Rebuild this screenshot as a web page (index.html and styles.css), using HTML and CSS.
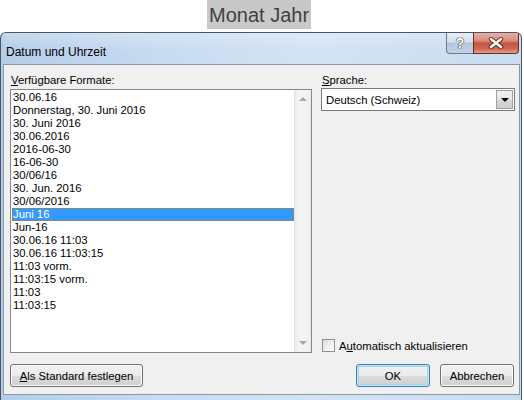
FILE: index.html
```html
<!DOCTYPE html>
<html lang="de">
<head>
    <meta charset="UTF-8">
    <title>Datum und Uhrzeit</title>
    <link rel="stylesheet" href="styles.css">
</head>
<body>
    <div class="caption">
        <span class="caption-box">Monat Jahr</span>
    </div>

    <div class="window">
        <!-- Title bar -->
        <div class="titlebar">
            <span class="title">Datum und Uhrzeit</span>
            <div class="caption-buttons">
                <span class="btn-help">?</span>
                <span class="btn-close">
                    <svg width="18" height="12" viewBox="0 0 18 12">
                        <path d="M4 2 L14 10 M14 2 L4 10" stroke="#5a2a22" stroke-width="4.4" stroke-linecap="round"/>
                        <path d="M4 2 L14 10 M14 2 L4 10" stroke="#ffffff" stroke-width="2.6" stroke-linecap="round"/>
                    </svg>
                </span>
            </div>
        </div>

        <!-- Client area -->
        <div class="client">
            <div class="main">
                <div class="col-left">
                    <div class="label"><u>V</u>erfügbare Formate:</div>
                    <div class="listbox">
                        <ul class="items">
                            <li>30.06.16</li>
                            <li>Donnerstag, 30. Juni 2016</li>
                            <li>30. Juni 2016</li>
                            <li>30.06.2016</li>
                            <li>2016-06-30</li>
                            <li>16-06-30</li>
                            <li>30/06/16</li>
                            <li>30. Jun. 2016</li>
                            <li>30/06/2016</li>
                            <li class="selected">Juni 16</li>
                            <li>Jun-16</li>
                            <li>30.06.16 11:03</li>
                            <li>30.06.16 11:03:15</li>
                            <li>11:03 vorm.</li>
                            <li>11:03:15 vorm.</li>
                            <li>11:03</li>
                            <li>11:03:15</li>
                        </ul>
                        <div class="scrollbar">
                            <span class="arrow-up"></span>
                            <span class="arrow-down"></span>
                        </div>
                    </div>
                </div>

                <div class="col-right">
                    <div class="label"><u>S</u>prache:</div>
                    <div class="combo">
                        <span class="combo-text">Deutsch (Schweiz)</span>
                        <span class="combo-btn"><span class="combo-arrow"></span></span>
                    </div>
                    <div class="check">
                        <span class="checkbox"></span>
                        <span>A<u>u</u>tomatisch aktualisieren</span>
                    </div>
                </div>
            </div>

            <div class="buttons">
                <button class="btn btn-wide" type="button"><u>A</u>ls Standard festlegen</button>
                <span class="spacer"></span>
                <button class="btn btn-default" type="button">OK</button>
                <button class="btn" type="button">Abbrechen</button>
            </div>
        </div>
    </div>
</body>
</html>
```

FILE: styles.css
```css
body {
    margin: 0;
    background: #ffffff;
    font-family: "Liberation Sans", Arial, sans-serif;
    overflow: hidden;
    height: 400px;
}

u {
    text-decoration-thickness: 1px;
    text-underline-offset: 1px;
}

.caption {
    height: 29px;
    padding-left: 207px;
}

.caption-box {
    display: inline-block;
    height: 29px;
    line-height: 31px;
    padding: 0 2px;
    background: #c8c8c8;
    color: #404040;
    font-size: 20px;
}

.window {
    margin-top: 3px;
    width: 522px;
    box-sizing: border-box;
    border: 1px solid #4a5563;
    border-bottom: none;
    border-radius: 6px 6px 0 0;
    padding: 0 1px 5px 2px;
    background: linear-gradient(to right, #b4cde9 0%, #c7dbf1 30%, #d3e3f4 60%, #c9dcf0 100%);
    height: 368px;
}

.titlebar {
    display: flex;
    height: 31px;
    background: linear-gradient(to bottom, rgba(255,255,255,0.25), rgba(255,255,255,0) 60%);
}

.title {
    font-size: 12px;
    color: #000000;
    padding-left: 3px;
    padding-top: 12px;
    flex: 1;
}

.caption-buttons {
    display: flex;
    height: 22px;
    margin-right: 1px;
}

.btn-help {
    width: 27px;
    height: 21px;
    box-sizing: border-box;
    border: 1px solid #6b7b8f;
    border-top: none;
    border-right: none;
    border-radius: 0 0 0 4px;
    background: linear-gradient(to bottom, #e6eef7 0%, #d4e0ee 45%, #b3c5dc 50%, #c2d3e7 100%);
    color: #ffffff;
    font-size: 14px;
    font-weight: bold;
    text-align: center;
    line-height: 20px;
    text-shadow: 0 0 1px #333, 0 0 1px #333, 0 0 1px #333;
}

.btn-close {
    width: 46px;
    height: 21px;
    box-sizing: border-box;
    border: 1px solid #6e2d22;
    border-top: none;
    border-radius: 0 0 4px 0;
    background: linear-gradient(to bottom, #eab0a4 0%, #d98a78 40%, #c45640 50%, #cf6a52 80%, #e2a08f 100%);
    display: flex;
    align-items: center;
    justify-content: center;
}

.client {
    height: 331px;
    box-sizing: border-box;
    border: 1px solid #8797ab;
    background: #f0f0f0;
    padding: 8px 4px 7px 6px;
    display: flex;
    flex-direction: column;
    font-size: 11.3px;
    color: #000000;
}

.main {
    display: flex;
    gap: 9px;
}

.col-left {
    width: 302px;
}

.label {
    height: 16px;
    line-height: 15px;
    padding-left: 1px;
}

.listbox {
    height: 264px;
    box-sizing: border-box;
    border: 1px solid #828790;
    background: #ffffff;
    display: flex;
}

.items {
    list-style: none;
    margin: 1px 0 0 1px;
    padding: 0;
    flex: 1;
}

.items li {
    height: 13px;
    line-height: 13px;
    padding-left: 1px;
    white-space: nowrap;
}

.items li.selected {
    background: #3399ff;
    color: #ffffff;
    outline: 1px dotted #c87a00;
    outline-offset: -1px;
}

.scrollbar {
    width: 17px;
    border-left: 1px solid #e4e4e4;
    background: linear-gradient(to right, #ececec, #f4f4f4 30%, #f4f4f4 70%, #ececec);
    display: flex;
    flex-direction: column;
    justify-content: space-between;
    align-items: center;
    padding: 7px 0;
    box-sizing: border-box;
}

.arrow-up, .arrow-down {
    width: 0;
    height: 0;
    border-left: 4px solid transparent;
    border-right: 4px solid transparent;
}

.arrow-up {
    border-bottom: 4px solid #a7a7a7;
}

.arrow-down {
    border-top: 4px solid #a7a7a7;
}

.col-right {
    flex: 1;
    display: flex;
    flex-direction: column;
}

.combo {
    height: 23px;
    margin-top: -1px;
    box-sizing: border-box;
    border: 1px solid #7a7a7a;
    background: #ffffff;
    display: flex;
    align-items: center;
    padding: 1px;
}

.combo-text {
    flex: 1;
    padding-left: 3px;
}

.combo-btn {
    width: 17px;
    height: 19px;
    box-sizing: border-box;
    border: 1px solid #a0a0a0;
    background: linear-gradient(to bottom, #f2f2f2 0%, #e6e6e6 50%, #d6d6d6 51%, #cfcfcf 100%);
    display: flex;
    align-items: center;
    justify-content: center;
}

.combo-arrow {
    width: 0;
    height: 0;
    border-left: 4px solid transparent;
    border-right: 4px solid transparent;
    border-top: 4px solid #000000;
}

.check {
    margin-top: auto;
    margin-bottom: 1px;
    display: flex;
    align-items: center;
    gap: 4px;
    padding-left: 1px;
    height: 13px;
}

.checkbox {
    width: 13px;
    height: 13px;
    box-sizing: border-box;
    border: 1px solid #8e8f8f;
    background: linear-gradient(135deg, #dcdcdc, #ffffff);
}

.buttons {
    display: flex;
    gap: 10px;
    margin-top: 11px;
    margin-right: 1px;
}

.spacer {
    flex: 1;
}

.btn {
    width: 74px;
    height: 23px;
    box-sizing: border-box;
    border: 1px solid #707070;
    border-radius: 3px;
    background: linear-gradient(to bottom, #f2f2f2 0%, #ebebeb 50%, #dddddd 51%, #cfcfcf 100%);
    box-shadow: inset 0 0 0 1px #fcfcfc;
    font-family: "Liberation Sans", Arial, sans-serif;
    font-size: 11.3px;
    color: #000000;
    padding: 0;
}

.btn-wide {
    width: 133px;
}

.btn-default {
    border-color: #3c7fb1;
    box-shadow: inset 0 0 0 1px #c4e5f6, inset 0 0 0 2px #a6d4ef;
}
```
